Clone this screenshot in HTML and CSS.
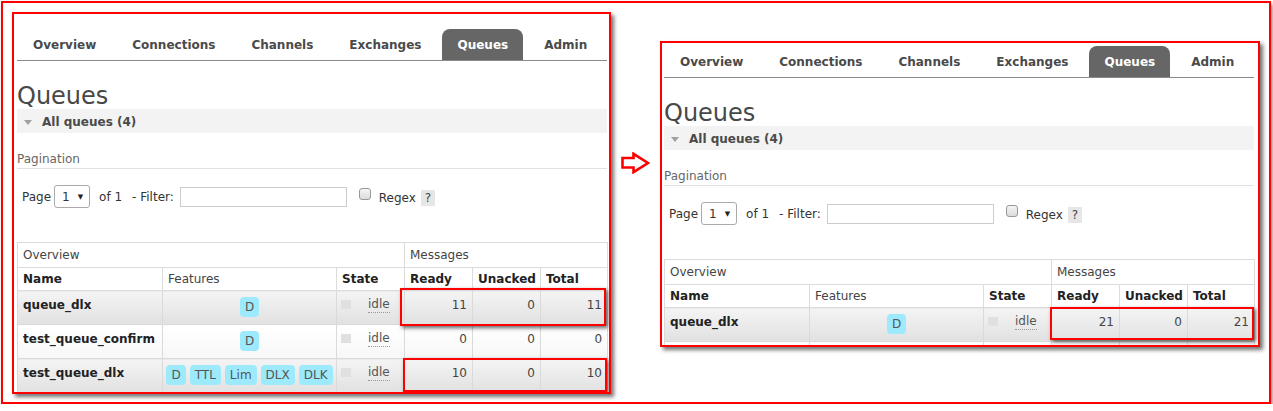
FILE: index.html
```html
<!DOCTYPE html>
<html>
<head>
<meta charset="utf-8">
<link rel="stylesheet" href="styles.css">
</head>
<body>
<div class="outer">
  <div class="frame frame-left">
    <div class="ui">
      <nav class="tabs">
        <a class="tab">Overview</a>
        <a class="tab">Connections</a>
        <a class="tab">Channels</a>
        <a class="tab">Exchanges</a>
        <a class="tab active">Queues</a>
        <a class="tab">Admin</a>
      </nav>
      <h1 class="title">Queues</h1>
      <div class="section-head"><span class="tri"></span>All queues (4)</div>
      <div class="subhead">Pagination</div>
      <div class="pager">
        <span class="lbl">Page</span>
        <span class="select">1<span class="caret">&#9660;</span></span>
        <span class="of">of 1</span>
        <span class="filter">- Filter:</span>
        <span class="input"></span>
        <span class="check"></span>
        <span class="regex">Regex</span>
        <span class="help">?</span>
      </div>
      <div class="table-wrap">
        <table class="grid">
          <colgroup><col class="c-name"><col class="c-feat"><col class="c-state"><col class="c-num"><col class="c-num"><col class="c-num2"></colgroup>
          <tr class="group"><td colspan="3">Overview</td><td colspan="3">Messages</td></tr>
          <tr class="head"><td class="b">Name</td><td>Features</td><td class="b">State</td><td class="b">Ready</td><td class="b">Unacked</td><td class="b">Total</td></tr>
          <tr class="row odd"><td class="name">queue_dlx</td><td class="feat"><span class="badge">D</span></td><td class="state"><span class="sq"></span><span class="idle">idle</span></td><td class="num">11</td><td class="num">0</td><td class="num">11</td></tr>
          <tr class="row even"><td class="name">test_queue_confirm</td><td class="feat"><span class="badge">D</span></td><td class="state"><span class="sq"></span><span class="idle">idle</span></td><td class="num">0</td><td class="num">0</td><td class="num">0</td></tr>
          <tr class="row odd"><td class="name">test_queue_dlx</td><td class="feat"><span class="badge">D</span><span class="badge">TTL</span><span class="badge">Lim</span><span class="badge">DLX</span><span class="badge">DLK</span></td><td class="state"><span class="sq"></span><span class="idle">idle</span></td><td class="num">10</td><td class="num">0</td><td class="num">10</td></tr>
        </table>
        <div class="hl hl-a"></div>
        <div class="hl hl-b"></div>
      </div>
    </div>
  </div>

  <svg class="arrow" width="29" height="22" viewBox="0 0 29 22"><polygon points="1.5,6 12.5,6 12.5,1.8 27,11 12.5,20.2 12.5,15.5 1.5,15.5" fill="#fff" stroke="#f00" stroke-width="2.6" stroke-linejoin="miter"/></svg>

  <div class="frame frame-right">
    <div class="ui">
      <nav class="tabs">
        <a class="tab">Overview</a>
        <a class="tab">Connections</a>
        <a class="tab">Channels</a>
        <a class="tab">Exchanges</a>
        <a class="tab active">Queues</a>
        <a class="tab">Admin</a>
      </nav>
      <h1 class="title">Queues</h1>
      <div class="section-head"><span class="tri"></span>All queues (4)</div>
      <div class="subhead">Pagination</div>
      <div class="pager">
        <span class="lbl">Page</span>
        <span class="select">1<span class="caret">&#9660;</span></span>
        <span class="of">of 1</span>
        <span class="filter">- Filter:</span>
        <span class="input"></span>
        <span class="check"></span>
        <span class="regex">Regex</span>
        <span class="help">?</span>
      </div>
      <div class="table-wrap">
        <table class="grid">
          <colgroup><col class="c-name"><col class="c-feat"><col class="c-state"><col class="c-num"><col class="c-num"><col class="c-num2"></colgroup>
          <tr class="group"><td colspan="3">Overview</td><td colspan="3">Messages</td></tr>
          <tr class="head"><td class="b">Name</td><td>Features</td><td class="b">State</td><td class="b">Ready</td><td class="b">Unacked</td><td class="b">Total</td></tr>
          <tr class="row odd"><td class="name">queue_dlx</td><td class="feat"><span class="badge">D</span></td><td class="state"><span class="sq"></span><span class="idle">idle</span></td><td class="num">21</td><td class="num">0</td><td class="num">21</td></tr>
          <tr class="row even"><td></td><td></td><td></td><td></td><td></td><td></td></tr>
        </table>
        <div class="hl hl-c"></div>
      </div>
    </div>
  </div>
</div>
</body>
</html>
```

FILE: styles.css
```css
* { box-sizing: border-box; }

body {
  margin: 0;
  background: #fff;
  font-family: "DejaVu Sans", Verdana, sans-serif;
  font-size: 12px;
  color: #333;
}

.outer {
  margin: 1px 0 0 1px;
  width: 1270px;
  height: 403px;
  border: 2px solid #f00;
  box-shadow: 2px 3px 4px rgba(0, 0, 0, 0.45);
  display: flex;
  align-items: flex-start;
  padding: 9px 0 0 9px;
}

.frame {
  border: 2px solid #f00;
  box-shadow: 3px 3px 4px rgba(0, 0, 0, 0.55);
  overflow: hidden;
  background: #fff;
  flex: none;
}

.frame-left {
  width: 599px;
  height: 382px;
  padding: 15px 2px 0 3px;
}

.frame-right {
  width: 600px;
  height: 306px;
  margin-top: 29px;
  padding: 3px 2px 0 2px;
}

.arrow {
  flex: none;
  margin: 140px 10px 0 10px;
  display: block;
}

.ui {
  width: 590px;
}

/* tabs */
.tabs {
  display: flex;
  height: 32px;
  border-bottom: 1px solid #8a8a8a;
  padding-left: 1px;
}

.tab {
  display: block;
  padding: 2px 15px 0;
  margin-right: 6px;
  line-height: 29px;
  font-weight: bold;
  color: #4a4a4a;
}

.tab.active {
  background: #666;
  color: #fff;
  border-radius: 8px 8px 0 0;
}

.title {
  margin: 22px 0 0;
  font-size: 24px;
  line-height: 26px;
  font-weight: normal;
  color: #484848;
}

.section-head {
  height: 24px;
  background: #f3f3f3;
  display: flex;
  align-items: center;
  padding: 2px 0 0 7px;
  font-weight: bold;
  color: #4a4a4a;
}

.tri {
  width: 0;
  height: 0;
  border-left: 4px solid transparent;
  border-right: 4px solid transparent;
  border-top: 5px solid #a0a0a0;
  margin-right: 10px;
}

.subhead {
  margin-top: 17px;
  height: 19px;
  line-height: 18px;
  border-bottom: 1px solid #e2e2e2;
  color: #666;
}

.pager {
  display: flex;
  align-items: center;
  padding: 16px 0 0 5px;
  height: 39px;
  color: #333;
}

.lbl { margin-right: 3px; }

.select {
  width: 36px;
  height: 23px;
  border: 1px solid #aaa;
  border-radius: 3px;
  display: flex;
  align-items: center;
  padding-left: 7px;
}

.caret {
  font-size: 7px;
  margin-left: 8px;
  color: #222;
}

.of { margin-left: 9px; }
.filter { margin-left: 10px; }

.input {
  width: 167px;
  height: 20px;
  border: 1px solid #ccc;
  margin-left: 6px;
}

.check {
  width: 12px;
  height: 12px;
  border: 1px solid #999;
  border-radius: 3px;
  background: linear-gradient(#f4f4f4, #dcdcdc);
  margin-left: 12px;
  margin-top: -6px;
}

.regex { margin-left: 8px; margin-top: 2px; }

.help {
  margin-left: 5px;
  width: 14px;
  height: 16px;
  background: #e6e6e6;
  text-align: center;
  line-height: 16px;
  margin-top: 2px;
  color: #444;
}

/* table */
.table-wrap {
  position: relative;
  margin-top: 34px;
}

.grid {
  width: 590px;
  border-collapse: collapse;
  table-layout: fixed;
}

.c-name { width: 145px; }
.c-feat { width: 174px; }
.c-state { width: 68px; }
.c-num { width: 68px; }
.c-num2 { width: 67px; }

.grid td {
  border: 1px solid #dcdcdc;
  padding: 0 5px;
  color: #444;
}

.group td {
  height: 25px;
  vertical-align: middle;
}

.head td {
  height: 23px;
  vertical-align: middle;
}

.head td.b { font-weight: bold; color: #222; }

.row td {
  height: 34px;
  vertical-align: top;
  padding-top: 7px;
  line-height: 15px;
  border-color: #dadada;
}

.row.odd td { background: linear-gradient(#f4f4f4, #e1e1e1); }
.row.even td { background: linear-gradient(#fff, #f7f7f7); }

.row td.name {
  font-weight: bold;
  color: #222;
}

.row td.feat {
  text-align: center;
  padding: 6px 0 0;
  white-space: nowrap;
}

.badge {
  display: inline-block;
  height: 20px;
  line-height: 20px;
  padding: 0 5px;
  border-radius: 4px;
  background: #9eeafd;
  color: #555;
  margin: 0 2px;
}

.row td.state {
  padding-left: 4px;
  padding-top: 6px;
}

.sq {
  display: inline-block;
  width: 10px;
  height: 9px;
  background: #e0e0e0;
  vertical-align: top;
  margin-top: 3px;
}

.idle {
  display: inline-block;
  margin-left: 17px;
  color: #555;
  line-height: 15px;
  border-bottom: 1px dotted #999;
}

.row td.num { text-align: right; }

/* highlight overlays */
.hl {
  position: absolute;
  border: 2px solid #f00;
  box-shadow: 2px 2px 4px rgba(0, 0, 0, 0.6);
}

.hl-a { left: 383px; top: 46px; width: 206px; height: 38px; }
.hl-b { left: 386px; top: 116px; width: 204px; height: 34px; }
.hl-c { left: 386px; top: 48px; width: 204px; height: 33px; }
```
